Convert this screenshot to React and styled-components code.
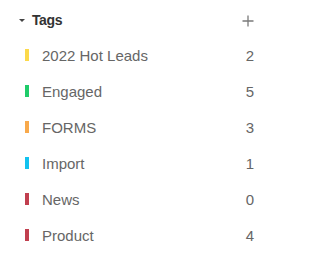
import React from 'react';
import styled, { createGlobalStyle } from 'styled-components';

const GlobalStyle = createGlobalStyle`
  body {
    margin: 0;
    background: #fff;
    font-family: 'Liberation Sans', Arial, sans-serif;
  }
`;

const tags = [
  { name: '2022 Hot Leads', count: 2, color: '#fcd94a' },
  { name: 'Engaged', count: 5, color: '#1fcc6a' },
  { name: 'FORMS', count: 3, color: '#f8a94b' },
  { name: 'Import', count: 1, color: '#12c2ef' },
  { name: 'News', count: 0, color: '#c13f4f' },
  { name: 'Product', count: 4, color: '#c13f4f' },
];

const Panel = styled.div`
  width: 272px;
  display: flex;
  flex-direction: column;
`;

const Header = styled.div`
  box-sizing: border-box;
  height: 37px;
  display: flex;
  align-items: center;
  padding: 2px 18px 0 19px;
`;

const Caret = styled.span`
  width: 0;
  height: 0;
  border-left: 3px solid transparent;
  border-right: 3px solid transparent;
  border-top: 3px solid #444;
  margin-right: 7px;
  margin-top: 2px;
`;

const Title = styled.span`
  flex: 1;
  font-size: 14px;
  font-weight: 700;
  letter-spacing: -0.4px;
  color: #333;
`;

const AddButton = styled.button`
  border: 0;
  background: none;
  padding: 0;
  width: 12px;
  height: 12px;
  display: flex;
  margin-top: 2px;
  cursor: pointer;
`;

const Row = styled.div`
  height: 36px;
  display: flex;
  align-items: center;
  padding: 0 18px 0 25px;
`;

const Bar = styled.span`
  flex: none;
  width: 4px;
  height: 12px;
  background: ${(p) => p.$color};
  margin-right: 13px;
`;

const Name = styled.span`
  flex: 1;
  font-size: 15px;
  color: #666;
`;

const Count = styled.span`
  font-size: 15px;
  color: #666;
`;

export default function App() {
  return (
    <>
      <GlobalStyle />
      <Panel>
        <Header>
          <Caret />
          <Title>Tags</Title>
          <AddButton aria-label="Add tag">
            <svg width="12" height="12" viewBox="0 0 12 12">
              <path d="M6 0.5v11M0.5 6h11" stroke="#7a7a7a" strokeWidth="1.3" fill="none" />
            </svg>
          </AddButton>
        </Header>
        {tags.map((t) => (
          <Row key={t.name}>
            <Bar $color={t.color} />
            <Name>{t.name}</Name>
            <Count>{t.count}</Count>
          </Row>
        ))}
      </Panel>
    </>
  );
}
